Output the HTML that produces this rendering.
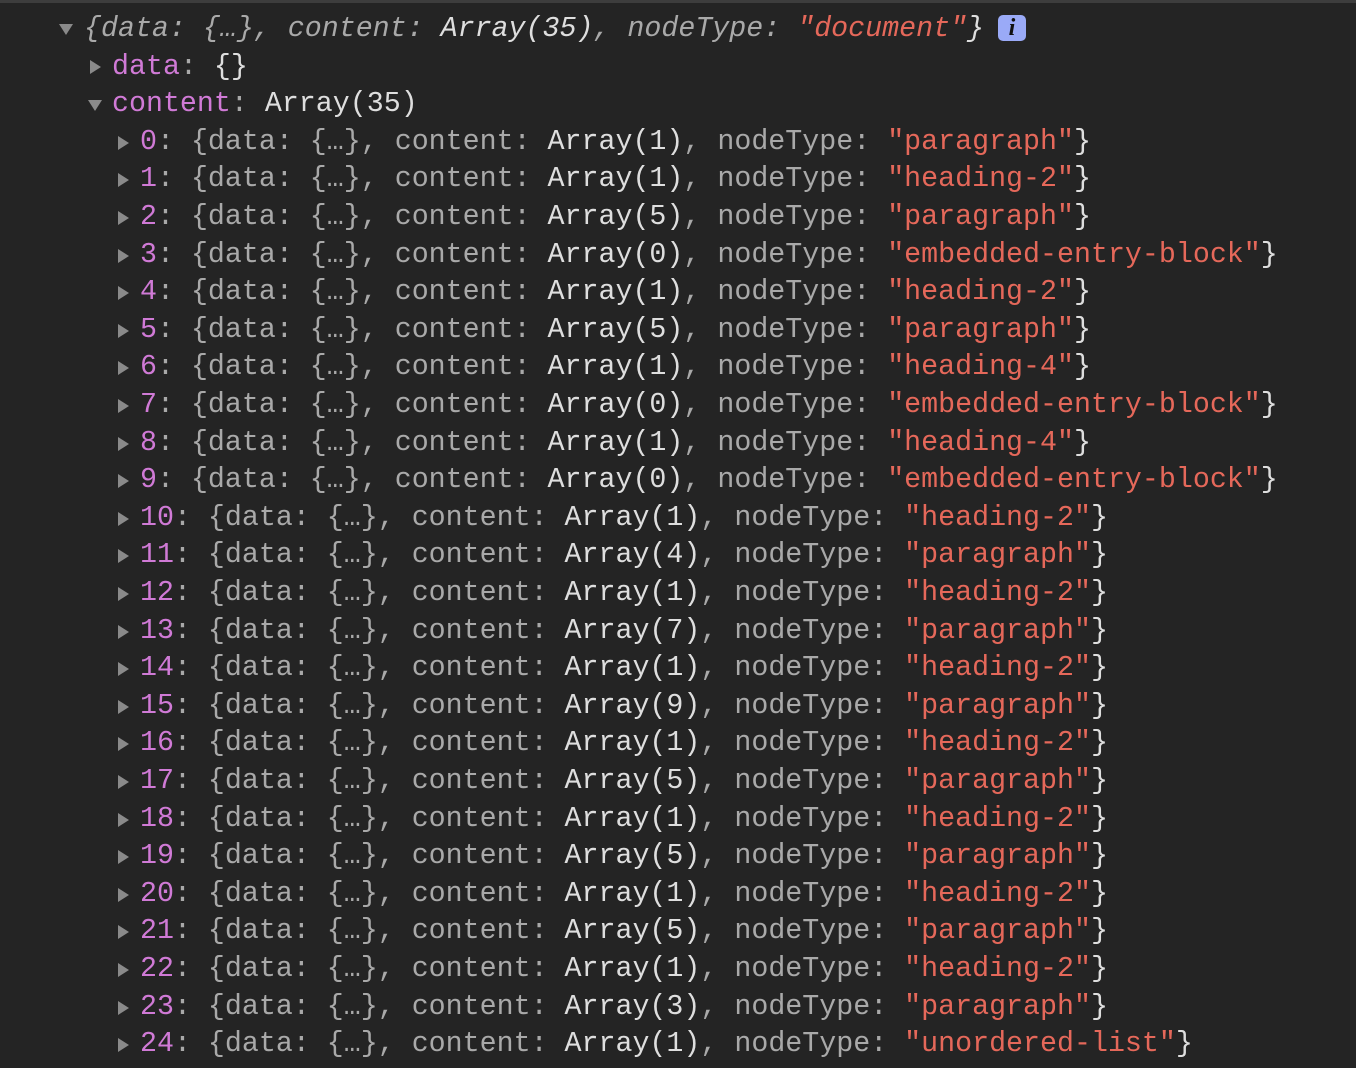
<!DOCTYPE html>
<html><head><meta charset="utf-8"><style>
html,body{margin:0;padding:0;background:#242424;width:1356px;height:1068px;overflow:hidden}
.top{position:absolute;left:0;top:0;width:1356px;height:3px;background:#3d3d3d}
.w{position:absolute;left:0;top:2px;width:1356px;height:1066px;overflow:hidden}
.l{position:absolute;height:37.6px;line-height:37.6px;font-family:"Liberation Mono",monospace;font-size:28.3px;white-space:pre;color:#a9a9a9}
.t{position:absolute;width:0;height:0}
.r{border-top:7px solid transparent;border-bottom:7px solid transparent;border-left:11px solid #8a8a8a}
.d{border-left:7px solid transparent;border-right:7px solid transparent;border-top:11px solid #8a8a8a}
.k{color:#d07ad6}.v{color:#dedede}.s{color:#e5685a}
.i{font-style:italic}
.info{position:absolute;left:998px;top:13px;width:28px;height:26px;border-radius:5px;background:#9aaaf7;color:#111;font:italic bold 24px "Liberation Serif",serif;text-align:center;line-height:26px}
.row{position:absolute;left:118px;height:37.6px}
.row .t{left:0;top:12px}
.row .l{left:22px;top:0}
</style></head><body>
<div class="top"></div>
<div class="w">
<div class="t d" style="left:59px;top:22px"></div>
<div class="l i" style="left:84px;top:9px">{data: {…}, content: <span class="v">Array(35)</span>, nodeType: <span class="s">"document"</span><span class="v">}</span></div>
<div class="info">i</div>
<div class="t r" style="left:90px;top:58px"></div>
<div class="l" style="left:112px;top:47px"><span class="k">data</span>: <span class="v">{}</span></div>
<div class="t d" style="left:88px;top:98px"></div>
<div class="l" style="left:112px;top:84px"><span class="k">content</span>: <span class="v">Array(35)</span></div>

<div class="row" style="top:121.8px"><div class="t r"></div><div class="l"><span class="k">0</span>: {data: {…}, content: <span class="v">Array(1)</span>, nodeType: <span class="s">"paragraph"</span><span class="v">}</span></div></div>
<div class="row" style="top:159.4px"><div class="t r"></div><div class="l"><span class="k">1</span>: {data: {…}, content: <span class="v">Array(1)</span>, nodeType: <span class="s">"heading-2"</span><span class="v">}</span></div></div>
<div class="row" style="top:197px"><div class="t r"></div><div class="l"><span class="k">2</span>: {data: {…}, content: <span class="v">Array(5)</span>, nodeType: <span class="s">"paragraph"</span><span class="v">}</span></div></div>
<div class="row" style="top:234.6px"><div class="t r"></div><div class="l"><span class="k">3</span>: {data: {…}, content: <span class="v">Array(0)</span>, nodeType: <span class="s">"embedded-entry-block"</span><span class="v">}</span></div></div>
<div class="row" style="top:272.2px"><div class="t r"></div><div class="l"><span class="k">4</span>: {data: {…}, content: <span class="v">Array(1)</span>, nodeType: <span class="s">"heading-2"</span><span class="v">}</span></div></div>
<div class="row" style="top:309.8px"><div class="t r"></div><div class="l"><span class="k">5</span>: {data: {…}, content: <span class="v">Array(5)</span>, nodeType: <span class="s">"paragraph"</span><span class="v">}</span></div></div>
<div class="row" style="top:347.4px"><div class="t r"></div><div class="l"><span class="k">6</span>: {data: {…}, content: <span class="v">Array(1)</span>, nodeType: <span class="s">"heading-4"</span><span class="v">}</span></div></div>
<div class="row" style="top:385px"><div class="t r"></div><div class="l"><span class="k">7</span>: {data: {…}, content: <span class="v">Array(0)</span>, nodeType: <span class="s">"embedded-entry-block"</span><span class="v">}</span></div></div>
<div class="row" style="top:422.6px"><div class="t r"></div><div class="l"><span class="k">8</span>: {data: {…}, content: <span class="v">Array(1)</span>, nodeType: <span class="s">"heading-4"</span><span class="v">}</span></div></div>
<div class="row" style="top:460.2px"><div class="t r"></div><div class="l"><span class="k">9</span>: {data: {…}, content: <span class="v">Array(0)</span>, nodeType: <span class="s">"embedded-entry-block"</span><span class="v">}</span></div></div>
<div class="row" style="top:497.8px"><div class="t r"></div><div class="l"><span class="k">10</span>: {data: {…}, content: <span class="v">Array(1)</span>, nodeType: <span class="s">"heading-2"</span><span class="v">}</span></div></div>
<div class="row" style="top:535.4px"><div class="t r"></div><div class="l"><span class="k">11</span>: {data: {…}, content: <span class="v">Array(4)</span>, nodeType: <span class="s">"paragraph"</span><span class="v">}</span></div></div>
<div class="row" style="top:573px"><div class="t r"></div><div class="l"><span class="k">12</span>: {data: {…}, content: <span class="v">Array(1)</span>, nodeType: <span class="s">"heading-2"</span><span class="v">}</span></div></div>
<div class="row" style="top:610.6px"><div class="t r"></div><div class="l"><span class="k">13</span>: {data: {…}, content: <span class="v">Array(7)</span>, nodeType: <span class="s">"paragraph"</span><span class="v">}</span></div></div>
<div class="row" style="top:648.2px"><div class="t r"></div><div class="l"><span class="k">14</span>: {data: {…}, content: <span class="v">Array(1)</span>, nodeType: <span class="s">"heading-2"</span><span class="v">}</span></div></div>
<div class="row" style="top:685.8px"><div class="t r"></div><div class="l"><span class="k">15</span>: {data: {…}, content: <span class="v">Array(9)</span>, nodeType: <span class="s">"paragraph"</span><span class="v">}</span></div></div>
<div class="row" style="top:723.4px"><div class="t r"></div><div class="l"><span class="k">16</span>: {data: {…}, content: <span class="v">Array(1)</span>, nodeType: <span class="s">"heading-2"</span><span class="v">}</span></div></div>
<div class="row" style="top:761px"><div class="t r"></div><div class="l"><span class="k">17</span>: {data: {…}, content: <span class="v">Array(5)</span>, nodeType: <span class="s">"paragraph"</span><span class="v">}</span></div></div>
<div class="row" style="top:798.6px"><div class="t r"></div><div class="l"><span class="k">18</span>: {data: {…}, content: <span class="v">Array(1)</span>, nodeType: <span class="s">"heading-2"</span><span class="v">}</span></div></div>
<div class="row" style="top:836.2px"><div class="t r"></div><div class="l"><span class="k">19</span>: {data: {…}, content: <span class="v">Array(5)</span>, nodeType: <span class="s">"paragraph"</span><span class="v">}</span></div></div>
<div class="row" style="top:873.8px"><div class="t r"></div><div class="l"><span class="k">20</span>: {data: {…}, content: <span class="v">Array(1)</span>, nodeType: <span class="s">"heading-2"</span><span class="v">}</span></div></div>
<div class="row" style="top:911.4px"><div class="t r"></div><div class="l"><span class="k">21</span>: {data: {…}, content: <span class="v">Array(5)</span>, nodeType: <span class="s">"paragraph"</span><span class="v">}</span></div></div>
<div class="row" style="top:949px"><div class="t r"></div><div class="l"><span class="k">22</span>: {data: {…}, content: <span class="v">Array(1)</span>, nodeType: <span class="s">"heading-2"</span><span class="v">}</span></div></div>
<div class="row" style="top:986.6px"><div class="t r"></div><div class="l"><span class="k">23</span>: {data: {…}, content: <span class="v">Array(3)</span>, nodeType: <span class="s">"paragraph"</span><span class="v">}</span></div></div>
<div class="row" style="top:1024.2px"><div class="t r"></div><div class="l"><span class="k">24</span>: {data: {…}, content: <span class="v">Array(1)</span>, nodeType: <span class="s">"unordered-list"</span><span class="v">}</span></div></div>
<div class="row" style="top:1061.8px"><div class="t r"></div><div class="l"><span class="k">25</span>: {data: {…}, content: <span class="v">Array(1)</span>, nodeType: <span class="s">"paragraph"</span><span class="v">}</span></div></div>
</div>
</body></html>
